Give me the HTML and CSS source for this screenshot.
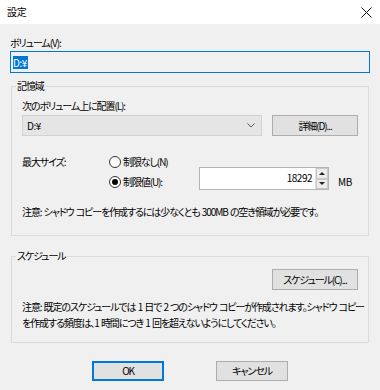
FILE: index.html
```html
<!DOCTYPE html>
<html lang="ja">
<head>
<meta charset="utf-8">
<title>設定</title>
<link rel="stylesheet" href="styles.css">
</head>
<body>
<div class="dialog">
  <div class="titlebar">
    <span class="title">設定</span>
    <svg class="close" width="11" height="11" viewBox="0 0 11 11"><path d="M0.5 0.5 L10.5 10.5 M10.5 0.5 L0.5 10.5" stroke="#111" stroke-width="1" fill="none"/></svg>
  </div>
  <div class="content">
    <div class="label">ボリューム(V):</div>
    <div class="textbox"><span class="sel">D:¥</span></div>

    <fieldset class="group group-storage">
      <legend>記憶域</legend>
      <div class="label">次のボリューム上に配置(L):</div>
      <div class="combo-row">
        <div class="combo">
          <span>D:¥</span>
          <svg class="chev" width="8" height="5" viewBox="0 0 8 5"><path d="M0.5 0.5 L4 4 L7.5 0.5" stroke="#555" stroke-width="1" fill="none"/></svg>
        </div>
        <div class="btn btn-detail">詳細(D)...</div>
      </div>
      <div class="size-grid">
        <div class="size-label">最大サイズ:</div>
        <div class="radio"><span class="circle"></span><span>制限なし(N)</span></div>
        <div class="radio radio-2"><span class="circle checked"></span><span>制限値(U):</span></div>
        <div class="spin">
          <div class="spin-value">18292</div>
          <div class="spin-btns">
            <div class="spin-btn"><span class="arrow-up"></span></div>
            <div class="spin-btn"><span class="arrow-down"></span></div>
          </div>
        </div>
        <div class="unit">MB</div>
      </div>
      <div class="note note-storage">注意: シャドウ コピーを作成するには少なくとも 300MB の空き領域が必要です。</div>
    </fieldset>

    <fieldset class="group group-schedule">
      <legend>スケジュール</legend>
      <div class="schedule-row">
        <div class="btn btn-detail">スケジュール(C)...</div>
      </div>
      <div class="note note-schedule">注意: 既定のスケジュールでは 1 日で 2 つのシャドウ コピーが作成されます。シャドウ コピー<br>を作成する頻度は、1 時間につき 1 回を超えないようにしてください。</div>
    </fieldset>

    <div class="actions">
      <div class="btn btn-action btn-default">OK</div>
      <div class="btn btn-action">キャンセル</div>
    </div>
  </div>
</div>
</body>
</html>
```

FILE: styles.css
```css
* { box-sizing: border-box; }

html, body {
  margin: 0;
  padding: 0;
}

body {
  width: 380px;
  height: 390px;
  background: #f0f0f0;
  font-family: "Noto Sans CJK JP", sans-serif;
  font-size: 10px;
  line-height: 16px;
  letter-spacing: -1.1px;
  word-spacing: 1px;
  color: #000;
  font-feature-settings: "palt" 1;
  overflow: hidden;
}

.dialog {
  display: flex;
  flex-direction: column;
  width: 380px;
  height: 390px;
}

.titlebar {
  height: 24px;
  flex: none;
  background: #fff;
  display: flex;
  align-items: center;
  justify-content: space-between;
  padding: 0 8px 0 7px;
}

.title {
  color: #000;
  letter-spacing: -0.3px;
}

.close {
  display: block;
  margin-top: 1px;
}

.content {
  padding: 11px 10px 0 10px;
  display: flex;
  flex-direction: column;
}

.label {
  height: 16px;
  white-space: nowrap;
}

.textbox {
  height: 22px;
  border: 1px solid #0078d7;
  background: #f0f0f0;
  padding: 3px 2px 0 2px;
}

.sel {
  display: inline-block;
  background: #0078d7;
  color: #fff;
  line-height: 13px;
  height: 13px;
  padding: 0 1px 0 0;
  letter-spacing: -0.4px;
}

.combo span {
  letter-spacing: -0.4px;
}

.group {
  margin: 5px 1px 0 1px;
  border: 1px solid #dcdcdc;
  padding: 0 10px 15px 10px;
  min-width: 0;
}

.group legend {
  padding: 0 1px;
  margin-left: -6px;
  line-height: 16px;
}

.group-storage .label {
  margin-top: 4px;
}

.combo-row {
  display: flex;
  gap: 10px;
  margin-top: 1px;
}

.combo {
  width: 240px;
  height: 21px;
  background: #e5e5e5;
  border: 1px solid #d2d2d2;
  display: flex;
  align-items: center;
  justify-content: space-between;
  padding: 0 6px 0 4px;
}

.chev {
  display: block;
}

.btn {
  height: 21px;
  background: #e1e1e1;
  border: 1px solid #adadad;
  display: flex;
  align-items: center;
  justify-content: center;
  white-space: nowrap;
}

.btn-detail {
  width: 86px;
}

.size-grid {
  display: grid;
  grid-template-columns: 86px 91px 130px auto;
  grid-template-rows: 20px 20px;
  margin-top: 16px;
  align-items: center;
}

.size-label {
  grid-column: 1;
  grid-row: 1;
}

.radio {
  grid-column: 2;
  grid-row: 1;
  display: flex;
  align-items: center;
  gap: 2px;
  white-space: nowrap;
}

.radio-2 {
  grid-row: 2;
}

.circle {
  width: 12px;
  height: 12px;
  border: 1px solid #333;
  border-radius: 50%;
  background: #fff;
  display: flex;
  align-items: center;
  justify-content: center;
  margin-left: 1px;
}

.circle.checked::after {
  content: "";
  width: 6px;
  height: 6px;
  border-radius: 50%;
  background: #000;
}

.spin {
  grid-column: 3;
  grid-row: 2;
  align-self: end;
  margin-bottom: 2px;
  height: 23px;
  border: 1px solid #b4b4b4;
  background: #fff;
  display: flex;
}

.spin-value {
  flex: 1;
  text-align: right;
  padding: 2px 3px 0 0;
  letter-spacing: -0.5px;
}

.spin-btns {
  width: 13px;
  display: flex;
  flex-direction: column;
  border-left: 1px solid #e0e0e0;
}

.spin-btn {
  flex: 1;
  background: #ececec;
  border: 1px solid #c8c8c8;
  display: flex;
  align-items: center;
  justify-content: center;
}

.arrow-up {
  width: 0;
  height: 0;
  border-left: 3px solid transparent;
  border-right: 3px solid transparent;
  border-bottom: 3px solid #222;
}

.arrow-down {
  width: 0;
  height: 0;
  border-left: 3px solid transparent;
  border-right: 3px solid transparent;
  border-top: 3px solid #222;
}

.unit {
  grid-column: 4;
  grid-row: 2;
  padding-left: 9px;
  letter-spacing: -0.3px;
}

.note {
  white-space: nowrap;
}

.note-storage {
  margin-top: 12px;
}

.group-schedule {
  margin-top: 12px;
  padding-bottom: 11px;
}

.schedule-row {
  display: flex;
  justify-content: flex-end;
  margin-top: 5px;
}

.note-schedule {
  margin-top: 9px;
}

.actions {
  display: flex;
  justify-content: center;
  gap: 52px;
  margin-top: 18px;
}

.btn-action {
  width: 72px;
  height: 20px;
}

.btn-default {
  border: 2px solid #0078d7;
}
```
